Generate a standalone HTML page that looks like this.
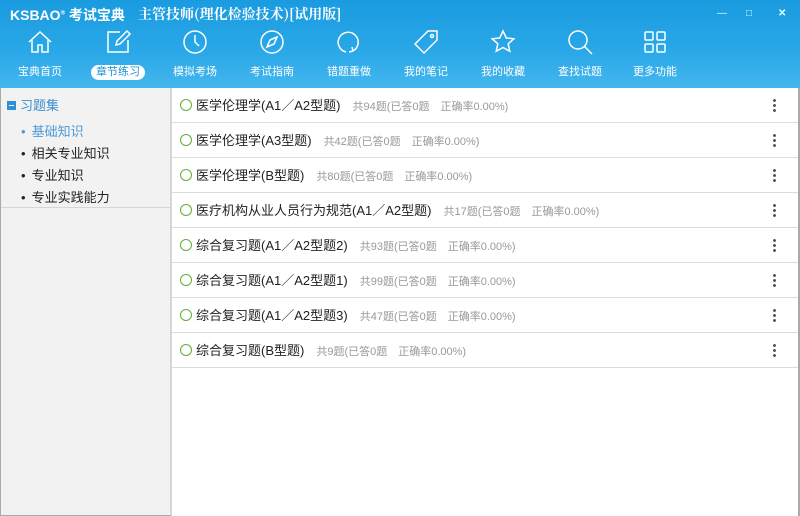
<!DOCTYPE html>
<html><head><meta charset="utf-8"><style>
*{margin:0;padding:0;box-sizing:border-box}
body{width:800px;height:516px;overflow:hidden;font-family:"Liberation Sans","Noto Sans CJK SC",sans-serif;background:#fff;position:relative}
.hdr{position:absolute;left:0;top:0;width:800px;height:88px;background:linear-gradient(#1a9be0,#2aa8e8 60%,#45b6ee);color:#fff}
.logo{position:absolute;left:10px;top:5px;font-weight:bold;font-size:14px;white-space:nowrap}
.logo sup{font-size:6px}
.title{position:absolute;left:138px;top:4px;font-size:14px;font-family:"Noto Serif CJK SC","Liberation Serif",serif;font-weight:bold;white-space:nowrap}
.wc{position:absolute;top:8px;font-size:10px;color:#dff}
.nav{position:absolute;top:28px;width:70px;text-align:center}
.nav svg{display:block;margin:0 auto;width:28px;height:28px}
.nav span{display:inline-block;margin-top:9px;font-size:11px;line-height:15px;padding:0 5px;border-radius:8px}
.nav span.on{background:#fff;color:#1a8fd8}
.side{position:absolute;left:0;top:88px;width:172px;height:428px;background:#f2f2f2;border-right:2px solid #d6d6d6;border-left:1px solid #aaa;border-bottom:1px solid #aaa}
.side .h{position:absolute;left:6px;top:7px;font-size:13px;color:#3a8fd0}
.side .h i{display:inline-block;width:9px;height:9px;background:#2f8fd8;margin-right:4px;vertical-align:0;position:relative}
.side .h i:after{content:"";position:absolute;left:2px;top:4px;width:5px;height:1px;background:#fff}
.side ul{position:absolute;left:20px;top:33px;list-style:none;font-size:13px;line-height:22px;color:#222}
.side li:before{content:"•";margin-right:6px}
.side li.a{color:#4a9ad8}
.sl{position:absolute;left:1px;width:169px;height:1px;background:#d6d6d6}
.row{position:absolute;left:172px;width:626px;height:35px;border-bottom:1px solid #dcdcdc;font-size:13px;color:#222;line-height:35px;padding-left:8px}
.row o{display:inline-block;width:12px;height:12px;border:1.5px solid #5fae3a;border-radius:50%;vertical-align:-1px;margin-right:4px}
.row s{text-decoration:none;font-size:11px;color:#999;margin-left:12px}
.row b{position:absolute;right:22px;top:10px;width:3px;height:14px;background:radial-gradient(circle,#555 1.3px,transparent 1.6px) 0 0/3px 5px}
.rb{position:absolute;left:798px;top:88px;width:2px;height:428px;background:#aaa}
</style></head><body>
<div class="hdr">
<div class="logo">KSBAO<sup>®</sup> 考试宝典</div>
<div class="title">主管技师(理化检验技术)[试用版]</div>
<div class="wc" style="left:717px">—</div><div class="wc" style="left:746px">□</div><div class="wc" style="left:778px;font-weight:bold">✕</div>
<div class="nav" style="left:5px"><svg viewBox="0 0 28 28" fill="none" stroke="#fff" stroke-width="1.5"><path d="M3 14L14 4l11 10M6 12v12h6v-7h4v7h6V12"/></svg><span>宝典首页</span></div>
<div class="nav" style="left:83px"><svg viewBox="0 0 28 28" fill="none" stroke="#fff" stroke-width="1.5"><path d="M16 4H4v20h20V12M12 17l1-4 10-10 3 3-10 10z"/></svg><span class="on">章节练习</span></div>
<div class="nav" style="left:160px"><svg viewBox="0 0 28 28" fill="none" stroke="#fff" stroke-width="1.5"><circle cx="14" cy="14" r="11"/><path d="M14 7v7l4 4"/></svg><span>模拟考场</span></div>
<div class="nav" style="left:237px"><svg viewBox="0 0 28 28" fill="none" stroke="#fff" stroke-width="1.5"><circle cx="14" cy="14" r="11"/><path d="M19 9l-7 3-3 7 7-3z"/></svg><span>考试指南</span></div>
<div class="nav" style="left:314px"><svg viewBox="0 0 28 28" fill="none" stroke="#fff" stroke-width="1.5"><path d="M11 24A10 10 0 1 1 18 23M18 23l-1-4M18 23l-4 1"/></svg><span>错题重做</span></div>
<div class="nav" style="left:391px"><svg viewBox="0 0 28 28" fill="none" stroke="#fff" stroke-width="1.5"><path d="M16 3h9v9L12 25 3 16z"/><circle cx="20" cy="8" r="1.5"/></svg><span>我的笔记</span></div>
<div class="nav" style="left:468px"><svg viewBox="0 0 28 28" fill="none" stroke="#fff" stroke-width="1.5"><path d="M14 3l3.3 7 7.5.8-5.6 5 1.6 7.5L14 19.5 7.2 23.3l1.6-7.5-5.6-5 7.5-.8z"/></svg><span>我的收藏</span></div>
<div class="nav" style="left:545px"><svg viewBox="0 0 28 28" fill="none" stroke="#fff" stroke-width="1.5"><circle cx="12" cy="12" r="9"/><path d="M18.5 18.5L26 26"/></svg><span>查找试题</span></div>
<div class="nav" style="left:620px"><svg viewBox="0 0 28 28" fill="none" stroke="#fff" stroke-width="1.5"><rect x="4" y="4" width="8" height="8" rx="1"/><rect x="16" y="4" width="8" height="8" rx="1"/><rect x="4" y="16" width="8" height="8" rx="1"/><rect x="16" y="16" width="8" height="8" rx="1"/></svg><span>更多功能</span></div>
</div>
<div class="side"><div class="h"><i></i>习题集</div>
<ul><li class="a">基础知识</li><li>相关专业知识</li><li>专业知识</li><li>专业实践能力</li></ul></div>
<div class="sl" style="top:207px"></div>
<div class="row" style="top:88px"><o></o>医学伦理学(A1／A2型题)<s>共94题(已答0题　正确率0.00%)</s><b></b></div>
<div class="row" style="top:123px"><o></o>医学伦理学(A3型题)<s>共42题(已答0题　正确率0.00%)</s><b></b></div>
<div class="row" style="top:158px"><o></o>医学伦理学(B型题)<s>共80题(已答0题　正确率0.00%)</s><b></b></div>
<div class="row" style="top:193px"><o></o>医疗机构从业人员行为规范(A1／A2型题)<s>共17题(已答0题　正确率0.00%)</s><b></b></div>
<div class="row" style="top:228px"><o></o>综合复习题(A1／A2型题2)<s>共93题(已答0题　正确率0.00%)</s><b></b></div>
<div class="row" style="top:263px"><o></o>综合复习题(A1／A2型题1)<s>共99题(已答0题　正确率0.00%)</s><b></b></div>
<div class="row" style="top:298px"><o></o>综合复习题(A1／A2型题3)<s>共47题(已答0题　正确率0.00%)</s><b></b></div>
<div class="row" style="top:333px"><o></o>综合复习题(B型题)<s>共9题(已答0题　正确率0.00%)</s><b></b></div>
<div class="rb"></div>
</body></html>
